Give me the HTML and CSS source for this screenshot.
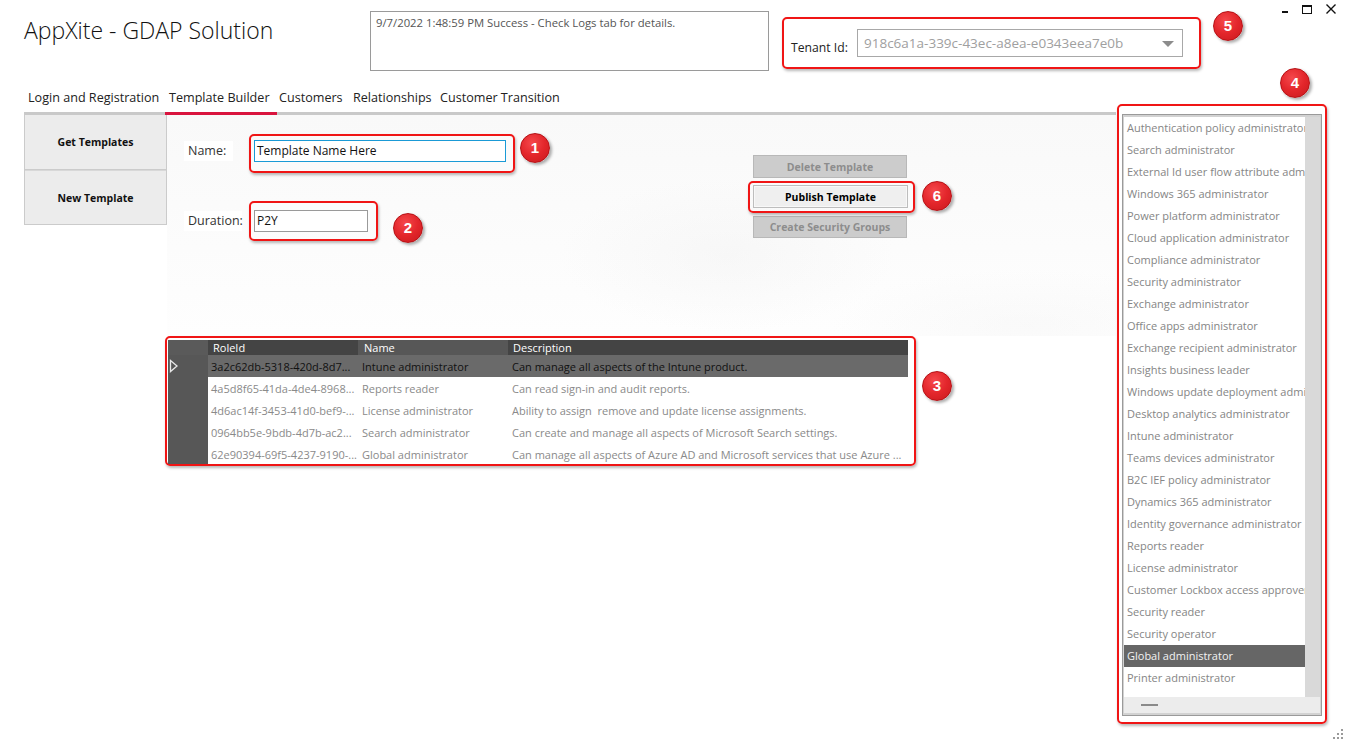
FILE: index.html
```html
<!DOCTYPE html>
<html lang="en">
<head>
<meta charset="utf-8">
<title>AppXite - GDAP Solution</title>
<link rel="stylesheet" href="styles.css">
</head>
<body>
<div class="app">
  <header class="top">
    <h1 class="title">AppXite - GDAP Solution</h1>
    <div class="logbox">9/7/2022 1:48:59 PM Success - Check Logs tab for details.</div>
    <div class="tenant hl">
      <span class="tenant-label">Tenant Id:</span>
      <div class="combo"><span class="combo-text">918c6a1a-339c-43ec-a8ea-e0343eea7e0b</span><span class="caret"></span></div>
      <span class="badge b5">5</span>
    </div>
    <div class="winctl">
      <svg class="wc wc-min" width="8" height="14" viewBox="0 0 8 14"><rect x="1" y="11" width="6" height="2" fill="#111"/></svg>
      <svg class="wc wc-max" width="12" height="14" viewBox="0 0 12 14"><rect x="1.5" y="5.5" width="9" height="8" fill="none" stroke="#111" stroke-width="1"/><rect x="1" y="5" width="10" height="2" fill="#111"/></svg>
      <svg class="wc wc-close" width="12" height="14" viewBox="0 0 12 14"><path d="M1.5 4.5 L10.5 13.5 M10.5 4.5 L1.5 13.5" stroke="#111" stroke-width="1.4" fill="none"/></svg>
    </div>
  </header>

  <div class="workspace">
    <div class="main">
      <nav class="tabs">
        <span class="tab t1">Login and Registration</span>
        <span class="tab t2 active">Template Builder</span>
        <span class="tab t3">Customers</span>
        <span class="tab t4">Relationships</span>
        <span class="tab t5">Customer Transition</span>
        <span class="tab-fill"></span>
      </nav>
      <div class="content">
        <aside class="sidebar">
          <div class="side-btn">Get Templates</div>
          <div class="side-btn">New Template</div>
        </aside>
        <section class="panel">
          <div class="panel-top">
            <div class="form">
              <div class="field f-name">
                <span class="lbl">Name:</span>
                <div class="hl hl-name">
                  <div class="input focused">Template Name Here</div>
                  <span class="badge b1">1</span>
                </div>
              </div>
              <div class="field f-dur">
                <span class="lbl">Duration:</span>
                <div class="hl hl-dur">
                  <div class="input dur">P2Y</div>
                  <span class="badge b2">2</span>
                </div>
              </div>
            </div>
            <div class="actions">
              <div class="btn disabled">Delete Template</div>
              <div class="hl hl-pub">
                <div class="btn primary">Publish Template</div>
                <span class="badge b6">6</span>
              </div>
              <div class="btn disabled">Create Security Groups</div>
            </div>
          </div>
          <div class="hl hl-grid">
            <div class="grid">
              <div class="row head">
                <span class="c rh"></span>
                <span class="c c1">RoleId</span>
                <span class="c c2">Name</span>
                <span class="c c3">Description</span>
              </div>
              <div class="row sel">
                <span class="c rh"><svg width="10" height="14" viewBox="0 0 10 14"><path d="M1.5 1.5 L8 7 L1.5 12.5 Z" fill="none" stroke="#e8e8e8" stroke-width="1.3"/></svg></span>
                <span class="c c1">3a2c62db-5318-420d-8d7...</span>
                <span class="c c2">Intune administrator</span>
                <span class="c c3">Can manage all aspects of the Intune product.</span>
              </div>
              <div class="row">
                <span class="c rh"></span>
                <span class="c c1">4a5d8f65-41da-4de4-8968...</span>
                <span class="c c2">Reports reader</span>
                <span class="c c3">Can read sign-in and audit reports.</span>
              </div>
              <div class="row">
                <span class="c rh"></span>
                <span class="c c1">4d6ac14f-3453-41d0-bef9-...</span>
                <span class="c c2">License administrator</span>
                <span class="c c3">Ability to assign&nbsp; remove and update license assignments.</span>
              </div>
              <div class="row">
                <span class="c rh"></span>
                <span class="c c1">0964bb5e-9bdb-4d7b-ac2...</span>
                <span class="c c2">Search administrator</span>
                <span class="c c3">Can create and manage all aspects of Microsoft Search settings.</span>
              </div>
              <div class="row">
                <span class="c rh"></span>
                <span class="c c1">62e90394-69f5-4237-9190-...</span>
                <span class="c c2">Global administrator</span>
                <span class="c c3">Can manage all aspects of Azure AD and Microsoft services that use Azure ...</span>
              </div>
            </div>
            <span class="badge b3">3</span>
          </div>
        </section>
      </div>
    </div>

    <div class="right">
      <div class="hl hl-list">
        <span class="badge b4">4</span>
        <div class="listbox">
          <div class="list-body">
            <ul class="items">
              <li>Authentication policy administrator</li>
              <li>Search administrator</li>
              <li>External Id user flow attribute administrator</li>
              <li>Windows 365 administrator</li>
              <li>Power platform administrator</li>
              <li>Cloud application administrator</li>
              <li>Compliance administrator</li>
              <li>Security administrator</li>
              <li>Exchange administrator</li>
              <li>Office apps administrator</li>
              <li>Exchange recipient administrator</li>
              <li>Insights business leader</li>
              <li>Windows update deployment administrator</li>
              <li>Desktop analytics administrator</li>
              <li>Intune administrator</li>
              <li>Teams devices administrator</li>
              <li>B2C IEF policy administrator</li>
              <li>Dynamics 365 administrator</li>
              <li>Identity governance administrator</li>
              <li>Reports reader</li>
              <li>License administrator</li>
              <li>Customer Lockbox access approver</li>
              <li>Security reader</li>
              <li>Security operator</li>
              <li class="selected">Global administrator</li>
              <li>Printer administrator</li>
            </ul>
            <div class="vscroll"></div>
          </div>
          <div class="hscroll"><span class="hthumb"></span></div>
        </div>
      </div>
    </div>
  </div>

  <svg class="grip" width="12" height="12" viewBox="0 0 12 12">
    <rect x="9" y="1" width="2" height="2" fill="#9a9a9a"/>
    <rect x="5" y="5" width="2" height="2" fill="#9a9a9a"/>
    <rect x="9" y="5" width="2" height="2" fill="#9a9a9a"/>
    <rect x="1" y="9" width="2" height="2" fill="#9a9a9a"/>
    <rect x="5" y="9" width="2" height="2" fill="#9a9a9a"/>
    <rect x="9" y="9" width="2" height="2" fill="#9a9a9a"/>
  </svg>
</div>
</body>
</html>
```

FILE: styles.css
```css
* { box-sizing: border-box; }
html, body { margin: 0; padding: 0; background: #fff; }
body { font-family: "Open Sans", "Noto Sans", sans-serif; color: #222; }

.app { position: relative; width: 1346px; height: 742px; overflow: hidden; background: #fff; }

/* ---------- header ---------- */
.top { display: flex; align-items: flex-start; height: 80px; }
.title {
  flex: none; width: 370px; margin: 0; padding: 14px 0 0 24px;
  font-weight: 300; font-size: 23px; line-height: 32px; color: #111;
}
.logbox {
  flex: none; width: 399px; height: 60px; margin-top: 11px;
  border: 1px solid #9a9a9a; padding: 2px 5px;
  font-size: 11.3px; line-height: 18px; color: #555;
}
.hl { border: 2px solid #f01515; border-radius: 5px; box-shadow: 1px 2px 3px rgba(0,0,0,0.28); }
.tenant {
  position: relative; flex: none; margin: 17px 0 0 13px; width: 419px; height: 52px;
  display: flex; align-items: flex-start; padding: 10px 16px 0 7px;
}
.tenant-label { flex: none; width: 66px; margin-top: 10px; font-size: 12.2px; line-height: 18px; color: #222; }
.combo {
  flex: none; width: 326px; height: 28px; border: 1px solid #a8a8a8; background: #fff;
  display: flex; align-items: center; justify-content: space-between; padding: 0 8px 0 6px;
}
.combo-text { font-size: 13.5px; color: #a0a0a0; line-height: 26px; }
.caret { width: 0; height: 0; border-left: 6px solid transparent; border-right: 6px solid transparent; border-top: 6px solid #8c8c8c; margin-top: 1px; }

.winctl { margin-left: auto; display: flex; align-items: flex-start; gap: 12px; padding-right: 9px; }
.wc { display: block; }

/* ---------- badges ---------- */
.badge {
  position: absolute; width: 30px; height: 30px; border-radius: 50%;
  background: radial-gradient(circle at 40% 32%, #f5484c 0%, #e3262b 50%, #c8191d 100%);
  border: 1px solid #b51115; box-shadow: 2px 2px 3px rgba(0,0,0,0.32);
  color: #fff; font: bold 15px/28px "Liberation Sans", "DejaVu Sans", sans-serif; text-align: center;
}
.b5 { left: 429px; top: -8px; }
.b1 { left: 269px; top: -3px; }
.b2 { left: 142px; top: 10px; }
.b6 { left: 172px; top: -2px; }
.b3 { left: 755px; top: 33px; }
.b4 { left: 161px; top: -38px; }

/* ---------- workspace ---------- */
.workspace { display: flex; align-items: flex-start; }
.main { flex: none; width: 1092px; margin-left: 24px; }
.right { flex: none; width: 210px; margin-left: 1px; margin-top: 24px; }

.tabs { display: flex; height: 35px; }
.tab {
  flex: none; height: 35px; padding: 8px 0 0 4px; border-bottom: 3px solid #c9c9c9;
  font-size: 12.6px; line-height: 20px; color: #222; white-space: nowrap;
}
.tab.active { border-bottom-color: #d9143e; }
.t1 { width: 141px; }
.t2 { width: 112px; }
.t3 { width: 72px; padding-left: 2px; }
.t4 { width: 87px; }
.t5 { width: 124px; }
.tab-fill { flex: 1; border-bottom: 3px solid #c9c9c9; }

.content { display: flex; align-items: flex-start; }
.sidebar { flex: none; width: 143px; border-left: 1px solid #cbcbcb; border-right: 1px solid #cbcbcb; }
.side-btn {
  height: 55px; background: #ececec; border-bottom: 1px solid #cbcbcb;
  display: flex; align-items: center; justify-content: center;
  font-size: 10.5px; font-weight: 700; color: #111;
}
.side-btn + .side-btn { border-top: 1px solid #d8d8d8; height: 55px; }

.panel { flex: none; width: 949px; }
.panel-top {
  height: 221px; display: flex; align-items: flex-start;
  background:
    radial-gradient(ellipse 240px 110px at 560px 140px, rgba(236,236,236,0.3), rgba(255,255,255,0) 70%),
    radial-gradient(ellipse 280px 80px at 860px 210px, rgba(236,236,236,0.25), rgba(255,255,255,0) 70%),
    linear-gradient(180deg, #f9f9f9 0%, #fcfcfc 60%, #fefefe 100%);
}
.form { flex: none; width: 586px; padding: 19px 0 0 17px; }
.field { display: flex; align-items: flex-start; }
.f-dur { margin-top: 28px; }
.lbl {
  flex: none; width: 65px; font-size: 12.5px; line-height: 20px; color: #333;
  background: linear-gradient(90deg, #fff 0, #fff 49px, transparent 49px); padding-left: 4px;
}
.f-name .lbl { margin-top: 7px; }
.f-dur .lbl { margin-top: 10px; background: linear-gradient(90deg, #fff 0, #fff 58px, transparent 58px); }

.hl-name { position: relative; padding: 4px 7px 9px 3px; }
.hl-dur { position: relative; padding: 7px 8px 7px 3px; }
.input {
  height: 22px; border: 1px solid #9a9a9a; background: #fff; padding: 0 2px;
  font-size: 12px; line-height: 20px; color: #111;
}
.input.focused { width: 252px; border-color: #1a9ad6; }
.input.dur { width: 114px; }

.actions { flex: none; margin-top: 40px; width: 155px; }
.btn {
  height: 23px; display: flex; align-items: center; justify-content: center;
  font-size: 10.5px; font-weight: 700; white-space: nowrap;
}
.btn.disabled { width: 154px; background: #cccccc; border: 1px solid #b8b8b8; color: #8d8d8d; }
.btn.disabled:last-child { height: 22px; margin-top: 3px; }
.hl-pub { position: relative; margin: 3px 0 0 -5px; width: 167px; height: 32px; padding: 2px 5px 3px 3px; }
.btn.primary { width: 155px; background: #efefef; border: 1px solid #bdbdbd; box-shadow: inset 0 0 0 1px #f8f8f8; color: #000; }

/* ---------- grid ---------- */
.hl-grid { position: relative; margin-left: -2px; width: 751px; height: 130px; padding: 2px 6px 0 1px; }
.grid { width: 740px; height: 124px; overflow: hidden; background: #fff; }
.row { display: flex; height: 22px; font-size: 11px; line-height: 24px; color: #8a8a8a; }
.c { flex: none; overflow: hidden; white-space: nowrap; padding-left: 3px; }
.rh { width: 40px; background: #575757; padding: 0; display: flex; align-items: center; padding-left: 1px; }
.c1 { width: 150px; }
.c2 { width: 150px; padding-left: 4px; }
.c3 { width: 400px; padding-left: 4px; }
.row.head { height: 15px; line-height: 15px; color: #fff; }
.row.head .c { padding-left: 5px; }
.row.head .rh { background: #5a5a5a; }
.row.head .c1 { background: #444; }
.row.head .c2 { background: #575757; padding-left: 6px; }
.row.head .c3 { background: #444; }
.row.sel { color: #111; }
.row.sel .c1, .row.sel .c2, .row.sel .c3 { background: #6a6a6a; }

/* ---------- role list ---------- */
.hl-list { position: relative; width: 210px; height: 620px; padding: 8px 3px 6px 3px; }
.listbox { height: 602px; border: 1px solid #9a9a9a; background: #d2d2d2; padding: 2px 1px 1px 1px; display: flex; flex-direction: column; }
.list-body { flex: none; height: 580px; display: flex; background: #fff; }
.items { list-style: none; margin: 0; padding: 0; width: 181px; overflow: hidden; }
.items li {
  height: 22px; line-height: 22px; padding-left: 3px; white-space: nowrap; overflow: hidden;
  font-size: 11px; color: #858585;
}
.items li.selected { background: #666; color: #f2f2f2; }
.vscroll { flex: none; width: 15px; background: #d9d9d9; }
.hscroll { flex: none; height: 16px; background: #ececec; position: relative; }
.hthumb { position: absolute; left: 17px; top: 7px; width: 17px; height: 2px; background: #8a8a8a; }

.grip { position: absolute; right: 2px; bottom: 2px; }
```
